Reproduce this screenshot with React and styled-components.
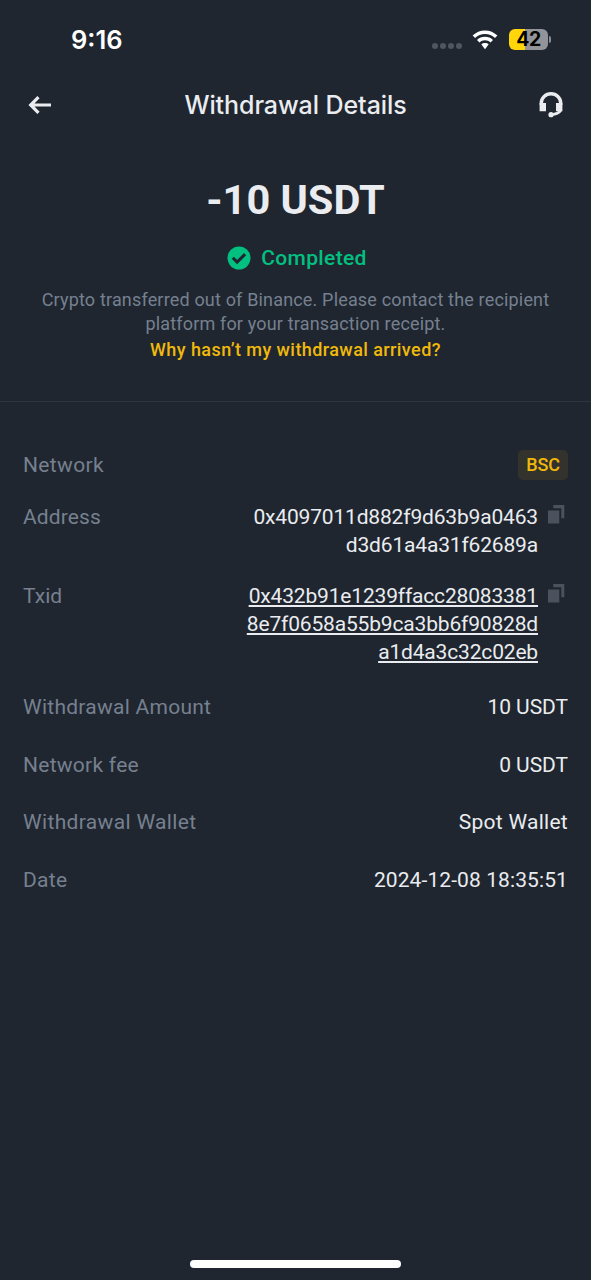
import React from "react";
import styled, { createGlobalStyle } from "styled-components";

const details = [
    { label: "Withdrawal Amount", labelSpacing: 0.26, value: "10 USDT", spacing: -0.05 },
    { label: "Network fee", labelSpacing: 0.27, value: "0 USDT", spacing: -0.05 },
    { label: "Withdrawal Wallet", labelSpacing: 0.34, value: "Spot Wallet", spacing: 0.27 },
    { label: "Date", labelSpacing: 0.3, value: "2024-12-08 18:35:51", spacing: 0.1 },
];

const addressLines = ["0x4097011d882f9d63b9a0463", "d3d61a4a31f62689a"];
const txidLines = ["0x432b91e1239ffacc28083381", "8e7f0658a55b9ca3bb6f90828d", "a1d4a3c32c02eb"];

function CopyIcon() {
    return (
        <CopySvg viewBox="0 0 17 19">
            <path d="M0 5.500h11.300v13H0z" />
            <path d="M5.300 0h11v13.300h-3V3.200h-8z" />
        </CopySvg>
    );
}

export default function App() {
    return (
        <>
            <GlobalStyle />
            <Screen>
                <StatusBar>
                    <Time>9:16</Time>
                    <StatusIcons>
                        <SignalDots>
                            <Dot />
                            <Dot />
                            <Dot />
                            <Dot />
                        </SignalDots>
                        <WifiSvg viewBox="0 0 26 20">
                            <path d="M13 .5C8.200.5 3.900 2.400.6 5.500L3.100 8C5.700 5.600 9.200 4.100 13 4.100s7.300 1.500 9.900 3.900l2.500-2.500C22.100 2.400 17.800.5 13 .5z" />
                            <path d="M13 6.800c-3.100 0-5.900 1.200-8 3.100l2.500 2.500c1.500-1.300 3.400-2.100 5.500-2.100s4 .8 5.500 2.100l2.500-2.500c-2.100-1.900-4.900-3.100-8-3.100z" />
                            <path d="M13 13c-1.400 0-2.700.5-3.700 1.300L13 19.200l3.700-4.900C15.700 13.500 14.400 13 13 13z" />
                        </WifiSvg>
                        <Battery>
                            <BatteryBody>42</BatteryBody>
                            <BatteryTip />
                        </Battery>
                    </StatusIcons>
                </StatusBar>

                <Header>
                    <BackSvg viewBox="0 0 24 20">
                        <path d="M23 10H3M10.500 2.200L2.700 10l7.800 7.800" />
                    </BackSvg>
                    <Title>Withdrawal Details</Title>
                    <SupportSvg viewBox="0 0 24 26">
                        <path className="band" d="M2.300 13v-2a9.700 9.200 0 0 1 19.400 0v2" />
                        <path d="M.6 11H7v8.300H.6zM17 11h6.400v8.300H17z" />
                        <path className="mic" d="M21.700 18.500c-1.500 2.500-5 3.700-9.500 4.100" />
                        <circle cx="12" cy="22.700" r="2.600" />
                    </SupportSvg>
                </Header>

                <Summary>
                    <Amount>-10 USDT</Amount>
                    <Status>
                        <CheckSvg viewBox="0 0 24 24">
                            <circle cx="12" cy="12" r="11.500" />
                            <path d="M5.800 11.800l4.300 4.300 8-8" />
                        </CheckSvg>
                        Completed
                    </Status>
                    <Description>
                        Crypto transferred out of Binance. Please contact the recipient
                        <br />
                        platform for your transaction receipt.
                    </Description>
                    <HelpLink>Why hasn’t my withdrawal arrived?</HelpLink>
                </Summary>

                <DetailList>
                    <NetworkRow>
                        <Label $spacing={0.35}>Network</Label>
                        <NetworkTag>BSC</NetworkTag>
                    </NetworkRow>
                    <HashRow $height={79}>
                        <Label $spacing={0.1}>Address</Label>
                        <Hash>
                            {addressLines.map((line) => (
                                <HashLine key={line}>{line}</HashLine>
                            ))}
                        </Hash>
                        <CopyIcon />
                    </HashRow>
                    <HashRow $height={96.4}>
                        <Label $spacing={0}>Txid</Label>
                        <Hash>
                            {txidLines.map((line) => (
                                <HashLine key={line} $link>{line}</HashLine>
                            ))}
                        </Hash>
                        <CopyIcon />
                    </HashRow>
                    {details.map(({ label, labelSpacing, value, spacing }) => (
                        <DetailRow key={label}>
                            <Label $spacing={labelSpacing}>{label}</Label>
                            <Value $spacing={spacing}>{value}</Value>
                        </DetailRow>
                    ))}
                </DetailList>

                <HomeIndicator />
            </Screen>
        </>
    );
}

const GlobalStyle = createGlobalStyle`
    * {
        box-sizing: border-box;
    }

    body {
        margin: 0;
        background-color: #1f2630;
        font-family: Roboto, "Liberation Sans", sans-serif;
    }
`;

const Screen = styled.div`
    width: 591px;
    height: 1280px;
    display: flex;
    flex-direction: column;
    background-color: #1f2630;
    color: #eaecef;
    white-space: nowrap;
    overflow: hidden;
`;

const StatusBar = styled.div`
    height: 79px;
    flex-shrink: 0;
    display: flex;
    align-items: center;
    justify-content: space-between;
    padding: 0 40px 0 71px;
`;

const Time = styled.span`
    font-family: Inter, sans-serif;
    font-size: 25.5px;
    font-weight: 600;
    color: #fff;
`;

const StatusIcons = styled.div`
    display: flex;
    align-items: center;
`;

const SignalDots = styled.div`
    display: flex;
    gap: 2px;
    padding-top: 13px;
    margin-right: 10px;
`;

const Dot = styled.span`
    width: 6px;
    height: 6px;
    border-radius: 50%;
    background-color: #50565f;
`;

const WifiSvg = styled.svg`
    width: 26px;
    height: 20px;
    fill: #fff;
    margin-right: 11px;
`;

const Battery = styled.div`
    display: flex;
    align-items: center;
    gap: 1px;
`;

const BatteryBody = styled.div`
    width: 39px;
    height: 21px;
    border-radius: 6px;
    background: linear-gradient(to right, #ffd60a 42%, #929499 42%);
    color: #000;
    font-family: Inter, sans-serif;
    font-size: 19.5px;
    font-weight: 650;
    line-height: 21px;
    letter-spacing: -0.5px;
    text-align: center;
`;

const BatteryTip = styled.span`
    width: 2px;
    height: 7px;
    border-radius: 0 2px 2px 0;
    background-color: #8b8e94;
`;

const Header = styled.header`
    height: 51px;
    flex-shrink: 0;
    display: flex;
    align-items: center;
    justify-content: space-between;
    padding: 0 28px 0 28px;
`;

const BackSvg = styled.svg`
    width: 24px;
    height: 20px;
    fill: none;
    stroke: #eaecef;
    stroke-width: 3.2;
`;

const Title = styled.h1`
    margin: 0;
    font-family: Inter, sans-serif;
    font-size: 25px;
    font-weight: 550;
    letter-spacing: -0.08px;
`;

const SupportSvg = styled.svg`
    width: 24px;
    height: 26px;
    fill: #eaecef;

    .band,
    .mic {
        fill: none;
        stroke: #eaecef;
        stroke-width: 3.4;
    }

    .mic {
        stroke-width: 2.6;
    }
`;

const Summary = styled.section`
    height: 272px;
    flex-shrink: 0;
    display: flex;
    flex-direction: column;
    align-items: center;
    padding-top: 45px;
    border-bottom: 1px solid #2c3640;
`;

const Amount = styled.div`
    font-size: 41.5px;
    font-weight: 700;
    line-height: 50px;
`;

const Status = styled.div`
    display: flex;
    align-items: center;
    gap: 10px;
    margin-top: 18px;
    height: 30px;
    padding-left: 3px;
    color: #02c080;
    font-size: 21px;
    font-weight: 500;
    letter-spacing: 0.35px;
`;

const CheckSvg = styled.svg`
    width: 24px;
    height: 24px;
    fill: #02c080;

    path {
        fill: none;
        stroke: #1f2630;
        stroke-width: 3;
    }
`;

const Description = styled.p`
    margin: 15px 0 0;
    font-size: 18px;
    line-height: 23.5px;
    letter-spacing: 0.17px;
    text-align: center;
    color: #76808f;
`;

const HelpLink = styled.a`
    margin-top: 3px;
    font-size: 18px;
    font-weight: 500;
    line-height: 24px;
    letter-spacing: 0.42px;
    color: #f0b90b;
`;

const DetailList = styled.section`
    flex: 1;
    padding: 47px 23px 0;
`;

const Label = styled.span`
    font-size: 21px;
    line-height: 28px;
    letter-spacing: ${({ $spacing }) => $spacing}px;
    color: #76808f;
`;

const NetworkRow = styled.div`
    display: flex;
    align-items: center;
    justify-content: space-between;
    height: 32px;
    margin-bottom: 22px;
`;

const NetworkTag = styled.span`
    width: 50px;
    height: 30px;
    border-radius: 5px;
    background-color: #33322c;
    color: #f0b90b;
    font-size: 18px;
    font-weight: 500;
    line-height: 30px;
    letter-spacing: -0.1px;
    text-align: center;
`;

const HashRow = styled.div`
    display: flex;
    align-items: flex-start;
    height: ${({ $height }) => $height}px;
`;

const Hash = styled.div`
    display: flex;
    flex-direction: column;
    align-items: flex-end;
    margin-top: 1px;
    margin-left: auto;
    margin-right: 10px;
`;

const HashLine = styled.span`
    font-size: 21px;
    line-height: 27.8px;
    letter-spacing: -0.17px;
    text-decoration: ${({ $link }) => ($link ? "underline" : "none")};
    text-decoration-thickness: 1.5px;
    text-underline-offset: 2px;
`;

const CopySvg = styled.svg`
    width: 17px;
    height: 19px;
    margin-top: 2px;
    margin-right: 3px;
    fill: #4a525e;
`;

const DetailRow = styled.div`
    height: 57.6px;
    display: flex;
    align-items: center;
    justify-content: space-between;
`;

const Value = styled.span`
    font-size: 21px;
    line-height: 28px;
    letter-spacing: ${({ $spacing }) => $spacing}px;
`;

const HomeIndicator = styled.div`
    width: 211px;
    height: 8px;
    flex-shrink: 0;
    margin: 0 auto 12px;
    border-radius: 4px;
    background-color: #fff;
`;
